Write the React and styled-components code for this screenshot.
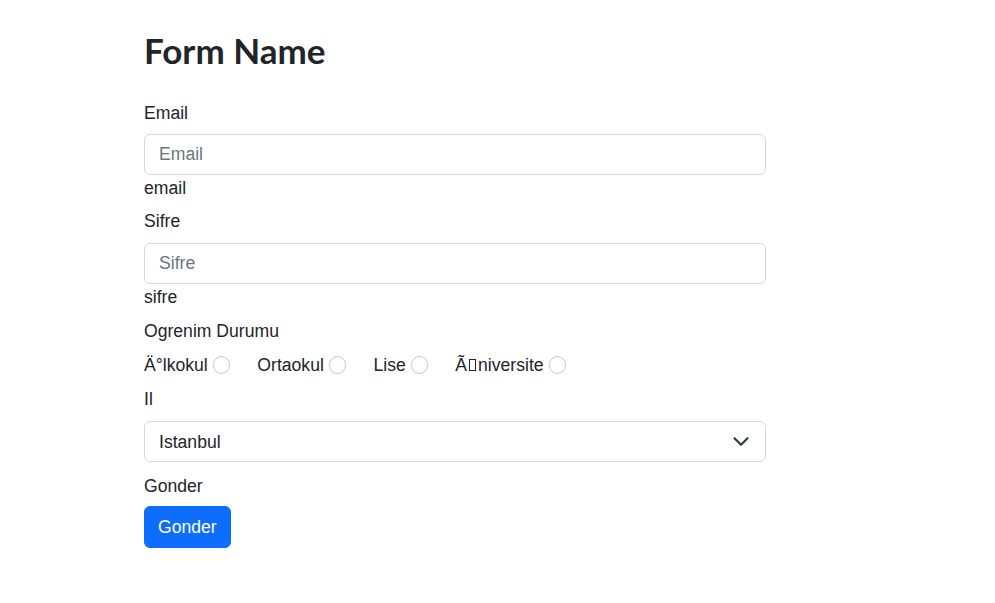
import React from "react";
import styled, { createGlobalStyle } from "styled-components";

const GlobalStyle = createGlobalStyle`
  html, body {
    margin: 0;
    padding: 0;
    background: #fff;
  }
  body {
    font-family: "Liberation Sans", Arial, sans-serif;
    font-size: 17.6px;
    line-height: 26px;
    color: #212529;
  }
`;

const Page = styled.div`
  width: 622px;
  padding: 28px 0 40px 144px;
`;

const Title = styled.h1`
  font-family: Lato, "Liberation Sans", sans-serif;
  font-weight: 700;
  font-size: 35px;
  line-height: 44px;
  margin: 0 0 28px;
`;

const Label = styled.label`
  display: block;
  margin-bottom: ${(p) => p.$mb || 8}px;
`;

const Input = styled.input`
  display: block;
  box-sizing: border-box;
  width: 100%;
  height: 41px;
  padding: 0 14px;
  font-family: inherit;
  font-size: 17.6px;
  color: #212529;
  border: 1px solid #d4d8dd;
  border-radius: 6px;
  outline: none;
  &::placeholder {
    color: #6c757d;
  }
`;

const Hint = styled.div`
  margin-bottom: ${(p) => p.$mb || 8}px;
`;

const RadioRow = styled.div`
  display: flex;
  align-items: center;
  gap: 27px;
  margin-bottom: 8px;
`;

const RadioItem = styled.label`
  display: flex;
  align-items: center;
  gap: 5px;
`;

const Box = styled.span`
  display: inline-block;
  box-sizing: border-box;
  width: 7px;
  height: 12px;
  margin: 0 2px;
  border: 1px solid #212529;
`;

const Radio = styled.input.attrs({ type: "radio" })`
  appearance: none;
  margin: 0;
  width: 17.6px;
  height: 17.6px;
  border: 1px solid #c3c5c8;
  border-radius: 50%;
  background: #fff;
`;

const SelectWrap = styled.div`
  position: relative;
  margin-bottom: 11px;
`;

const Select = styled.select`
  display: block;
  box-sizing: border-box;
  width: 100%;
  height: 41px;
  padding: 0 40px 0 14px;
  appearance: none;
  font-family: inherit;
  font-size: 17.6px;
  color: #212529;
  background: #fff;
  border: 1px solid #d4d8dd;
  border-radius: 6px;
  outline: none;
`;

const Chevron = styled.svg`
  position: absolute;
  right: 16px;
  top: 14px;
  pointer-events: none;
`;

const Button = styled.button`
  height: 42px;
  padding: 0 13px;
  font-family: inherit;
  font-size: 17.6px;
  color: #fff;
  background: #0d6efd;
  border: 1px solid #0d6efd;
  border-radius: 6px;
`;

const levels = [
  { id: "ilk", text: <>Ä°lkokul</> },
  { id: "orta", text: <>Ortaokul</> },
  { id: "lise", text: <>Lise</> },
  { id: "uni", text: <>Ã<Box />niversite</> },
];

export default function App() {
  return (
    <>
      <GlobalStyle />
      <Page>
        <Title>Form Name</Title>
        <Label>Email</Label>
        <Input placeholder="Email" />
        <Hint $mb={7}>email</Hint>
        <Label $mb={9}>Sifre</Label>
        <Input placeholder="Sifre" />
        <Hint>sifre</Hint>
        <Label>Ogrenim Durumu</Label>
        <RadioRow>
          {levels.map((l) => (
            <RadioItem key={l.id}>
              <span>{l.text}</span>
              <Radio name="durum" />
            </RadioItem>
          ))}
        </RadioRow>
        <Label $mb={9}>Il</Label>
        <SelectWrap>
          <Select defaultValue="Istanbul">
            <option>Istanbul</option>
            <option>Ankara</option>
            <option>Izmir</option>
          </Select>
          <Chevron width="18" height="13" viewBox="0 0 16 12">
            <path d="m2 3 6 6 6-6" fill="none" stroke="#343a40" strokeWidth="2" strokeLinecap="round" strokeLinejoin="round" />
          </Chevron>
        </SelectWrap>
        <Label $mb={7}>Gonder</Label>
        <Button>Gonder</Button>
      </Page>
    </>
  );
}
